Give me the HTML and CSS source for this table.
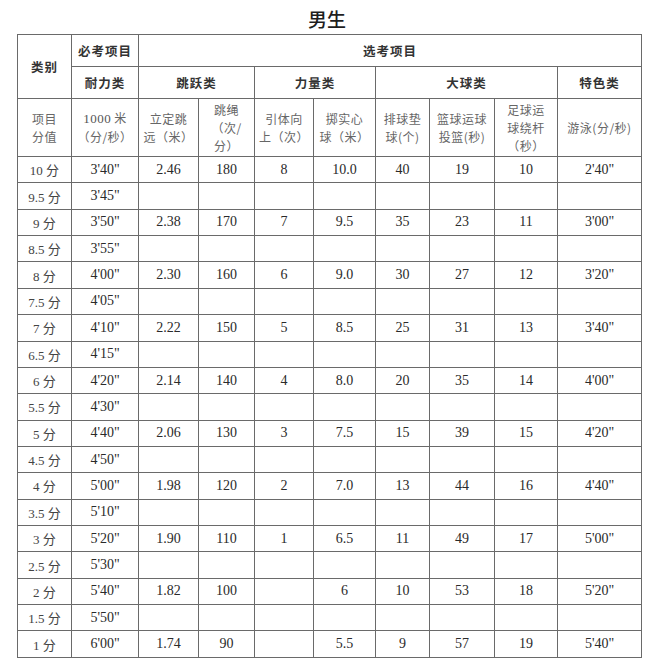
FILE: index.html
```html
<!DOCTYPE html>
<html lang="zh-CN">
<head>
<meta charset="utf-8">
<title>男生</title>
<link rel="stylesheet" href="styles.css">
</head>
<body>
<div class="page">
  <h1 class="title">男生</h1>
  <table class="score">
    <colgroup>
      <col class="c0"><col class="c1"><col class="c2"><col class="c3"><col class="c4">
      <col class="c5"><col class="c6"><col class="c7"><col class="c8"><col class="c9">
    </colgroup>
    <thead>
      <tr class="h1">
        <th rowspan="2" class="hb">类别</th>
        <th class="hb">必考项目</th>
        <th colspan="8" class="hb">选考项目</th>
      </tr>
      <tr class="h2">
        <th class="hb">耐力类</th>
        <th colspan="2" class="hb">跳跃类</th>
        <th colspan="2" class="hb">力量类</th>
        <th colspan="3" class="hb">大球类</th>
        <th class="hb">特色类</th>
      </tr>
      <tr class="h3">
        <th class="hl">项目<br>分值</th>
        <th class="hl"><span class="num">1000</span> 米<br>（分/秒）</th>
        <th class="hl">立定跳<br>远（米）</th>
        <th class="hl">跳绳<br>（次/<br>分）</th>
        <th class="hl">引体向<br>上（次）</th>
        <th class="hl">掷实心<br>球（米）</th>
        <th class="hl">排球垫<br>球(个)</th>
        <th class="hl">篮球运球<br>投篮(秒)</th>
        <th class="hl">足球运<br>球绕杆<br>（秒）</th>
        <th class="hl">游泳(分/秒)</th>
      </tr>
    </thead>
    <tbody>
      <tr><td>10 分</td><td>3'40"</td><td>2.46</td><td>180</td><td>8</td><td>10.0</td><td>40</td><td>19</td><td>10</td><td>2'40"</td></tr>
      <tr><td>9.5 分</td><td>3'45"</td><td></td><td></td><td></td><td></td><td></td><td></td><td></td><td></td></tr>
      <tr><td>9 分</td><td>3'50"</td><td>2.38</td><td>170</td><td>7</td><td>9.5</td><td>35</td><td>23</td><td>11</td><td>3'00"</td></tr>
      <tr><td>8.5 分</td><td>3'55"</td><td></td><td></td><td></td><td></td><td></td><td></td><td></td><td></td></tr>
      <tr><td>8 分</td><td>4'00"</td><td>2.30</td><td>160</td><td>6</td><td>9.0</td><td>30</td><td>27</td><td>12</td><td>3'20"</td></tr>
      <tr><td>7.5 分</td><td>4'05"</td><td></td><td></td><td></td><td></td><td></td><td></td><td></td><td></td></tr>
      <tr><td>7 分</td><td>4'10"</td><td>2.22</td><td>150</td><td>5</td><td>8.5</td><td>25</td><td>31</td><td>13</td><td>3'40"</td></tr>
      <tr><td>6.5 分</td><td>4'15"</td><td></td><td></td><td></td><td></td><td></td><td></td><td></td><td></td></tr>
      <tr><td>6 分</td><td>4'20"</td><td>2.14</td><td>140</td><td>4</td><td>8.0</td><td>20</td><td>35</td><td>14</td><td>4'00"</td></tr>
      <tr><td>5.5 分</td><td>4'30"</td><td></td><td></td><td></td><td></td><td></td><td></td><td></td><td></td></tr>
      <tr><td>5 分</td><td>4'40"</td><td>2.06</td><td>130</td><td>3</td><td>7.5</td><td>15</td><td>39</td><td>15</td><td>4'20"</td></tr>
      <tr><td>4.5 分</td><td>4'50"</td><td></td><td></td><td></td><td></td><td></td><td></td><td></td><td></td></tr>
      <tr><td>4 分</td><td>5'00"</td><td>1.98</td><td>120</td><td>2</td><td>7.0</td><td>13</td><td>44</td><td>16</td><td>4'40"</td></tr>
      <tr><td>3.5 分</td><td>5'10"</td><td></td><td></td><td></td><td></td><td></td><td></td><td></td><td></td></tr>
      <tr><td>3 分</td><td>5'20"</td><td>1.90</td><td>110</td><td>1</td><td>6.5</td><td>11</td><td>49</td><td>17</td><td>5'00"</td></tr>
      <tr><td>2.5 分</td><td>5'30"</td><td></td><td></td><td></td><td></td><td></td><td></td><td></td><td></td></tr>
      <tr><td>2 分</td><td>5'40"</td><td>1.82</td><td>100</td><td></td><td>6</td><td>10</td><td>53</td><td>18</td><td>5'20"</td></tr>
      <tr><td>1.5 分</td><td>5'50"</td><td></td><td></td><td></td><td></td><td></td><td></td><td></td><td></td></tr>
      <tr><td>1 分</td><td>6'00"</td><td>1.74</td><td>90</td><td></td><td>5.5</td><td>9</td><td>57</td><td>19</td><td>5'40"</td></tr>
    </tbody>
  </table>
</div>
</body>
</html>
```

FILE: styles.css
```css
html, body {
  margin: 0;
  padding: 0;
  background: #ffffff;
}

.page {
  padding: 0 0 0 17px;
  width: 624px;
}

.title {
  margin: 0;
  height: 34px;
  line-height: 38px;
  text-align: center;
  font-family: "Noto Sans CJK SC", sans-serif;
  font-weight: 500;
  font-size: 19px;
  color: #1e1e1e;
  padding-right: 4px;
}

.score {
  border-collapse: collapse;
  table-layout: fixed;
  width: 624px;
  font-family: "Liberation Serif", "Noto Sans CJK SC", serif;
  font-size: 14px;
  color: #2a2a2a;
}

.c0 { width: 54px; }
.c1 { width: 67px; }
.c2 { width: 60px; }
.c3 { width: 56px; }
.c4 { width: 59px; }
.c5 { width: 62px; }
.c6 { width: 54px; }
.c7 { width: 65px; }
.c8 { width: 63px; }
.c9 { width: 84px; }

.score th,
.score td {
  border: 1px solid #6a6a6a;
  padding: 0;
  text-align: center;
  vertical-align: middle;
}

.h1, .h2 { height: 32px; }
.h3 { height: 58px; }

.hb {
  font-family: "Noto Sans CJK SC", sans-serif;
  font-weight: 700;
  font-size: 12.5px;
  color: #333333;
  letter-spacing: 1px;
}

.hl {
  font-family: "Noto Sans CJK SC", sans-serif;
  font-weight: 400;
  font-size: 12px;
  line-height: 18px;
  color: #666666;
  letter-spacing: 0.5px;
}

.num {
  font-family: "Liberation Serif", serif;
  font-size: 13px;
  color: #555555;
}

.score tbody tr { height: 26.37px; }

.score td:first-child {
  font-size: 13px;
  color: #444444;
}
```
